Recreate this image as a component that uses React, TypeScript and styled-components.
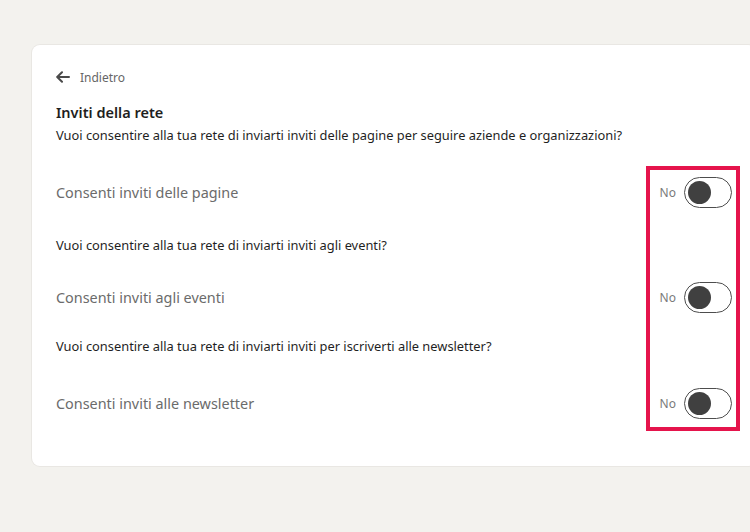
import React, { FC } from 'react'
import styled, { createGlobalStyle } from 'styled-components'

const GlobalStyle = createGlobalStyle`
  html, body {
    margin: 0;
    padding: 0;
    background: #f3f2ee;
    overflow: hidden;
  }
  body {
    font-family: 'Noto Sans', 'Open Sans', sans-serif;
    color: #1f1f1f;
  }
`

const Page = styled.div`
  width: 750px;
  height: 532px;
  padding: 45px 0 0 32px;
  box-sizing: border-box;
  position: relative;
`

const Card = styled.section`
  position: relative;
  width: 724px;
  box-sizing: border-box;
  background: #fff;
  border-radius: 8px;
  box-shadow: 0 0 0 1px #e9e7e3;
  padding: 21px 24px 47px;
`

const BackLink = styled.a`
  display: inline-flex;
  align-items: center;
  gap: 10px;
  height: 18px;
  color: #666;
  font-size: 12px;
  text-decoration: none;
  cursor: pointer;

  svg {
    color: #4a4a4a;
  }
`

const Title = styled.h2`
  margin: 14px 0 0;
  font-size: 14.5px;
  font-weight: 600;
  line-height: 20px;
  color: #1e1e1e;
`

const Question = styled.p<{ $top: number }>`
  margin: ${({ $top }) => $top}px 0 0;
  font-size: 12.85px;
  line-height: 18px;
  color: #1f1f1f;
`

const Row = styled.div<{ $top: number }>`
  margin-top: ${({ $top }) => $top}px;
  display: flex;
  align-items: center;
  justify-content: space-between;
  height: 32px;
`

const RowLabel = styled.span`
  font-size: 14.4px;
  color: #6b6b6b;
`

const SwitchWrap = styled.label`
  display: flex;
  align-items: center;
  gap: 8px;
  font-size: 12px;
  color: #7a7a7a;
`

const Track = styled.span`
  position: relative;
  display: block;
  width: 48px;
  height: 31px;
  box-sizing: border-box;
  border: 1px solid #4d4d4d;
  border-radius: 16px;
  background: #fff;
`

const Knob = styled.span`
  position: absolute;
  top: 3px;
  left: 3px;
  width: 23px;
  height: 23px;
  border-radius: 50%;
  background: #404040;
`

const Highlight = styled.div`
  position: absolute;
  left: 614px;
  top: 121px;
  width: 94px;
  height: 265px;
  box-sizing: border-box;
  border: 4px solid #e5144c;
  pointer-events: none;
`

const BackArrow: FC = () => (
  <svg width="14" height="12" viewBox="0 0 14 12" fill="none" stroke="currentColor" strokeWidth="2" strokeLinecap="round" strokeLinejoin="round">
    <path d="M13 6H1.5M6 1.2L1.2 6 6 10.8" />
  </svg>
)

const Toggle: FC = () => (
  <SwitchWrap>
    No
    <Track>
      <Knob />
    </Track>
  </SwitchWrap>
)

const settings = [
  { label: 'Consenti inviti delle pagine', question: null, qTop: 0, rowTop: 32 },
  {
    label: 'Consenti inviti agli eventi',
    question: 'Vuoi consentire alla tua rete di inviarti inviti agli eventi?',
    qTop: 28,
    rowTop: 27,
  },
  {
    label: 'Consenti inviti alle newsletter',
    question: 'Vuoi consentire alla tua rete di inviarti inviti per iscriverti alle newsletter?',
    qTop: 24,
    rowTop: 32,
  },
]

const App: FC = () => (
  <Page>
    <GlobalStyle />
    <Card>
      <BackLink>
        <BackArrow />
        Indietro
      </BackLink>
      <Title>Inviti della rete</Title>
      <Question $top={4}>
        Vuoi consentire alla tua rete di inviarti inviti delle pagine per seguire aziende e organizzazioni?
      </Question>
      {settings.map((s) => (
        <React.Fragment key={s.label}>
          {s.question && <Question $top={s.qTop}>{s.question}</Question>}
          <Row $top={s.rowTop}>
            <RowLabel>{s.label}</RowLabel>
            <Toggle />
          </Row>
        </React.Fragment>
      ))}
      <Highlight />
    </Card>
  </Page>
)

export default App
